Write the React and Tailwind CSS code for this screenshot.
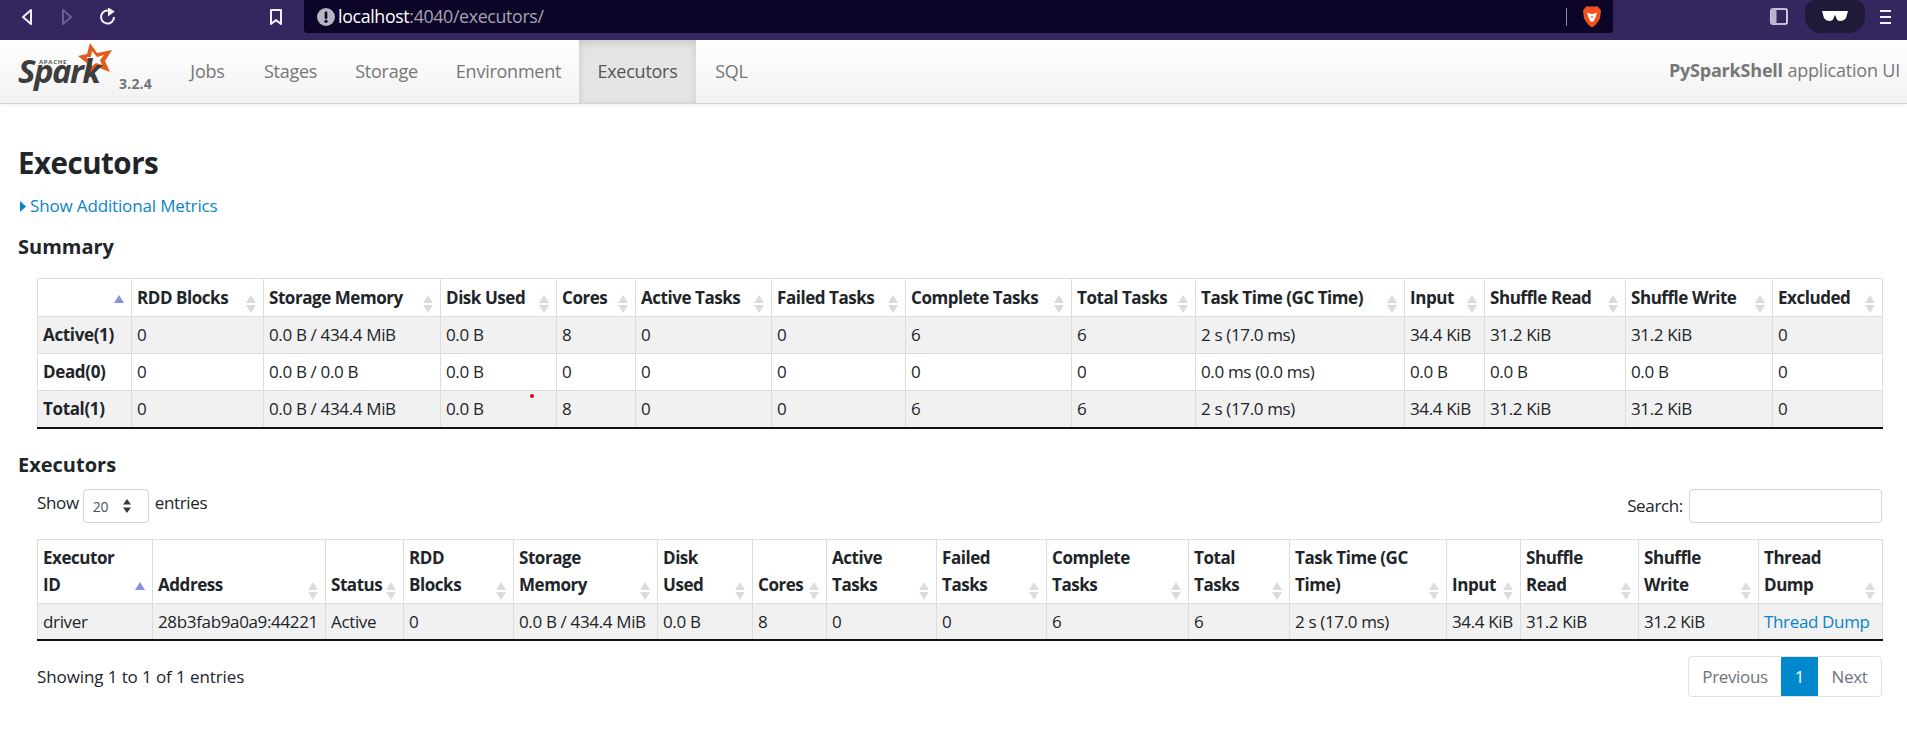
import React from "react";

const Sort = ({ active, className }) => (
  <svg className={className} width="12" height="19" viewBox="0 0 12 19">
    <path d="M6 0 L11 8 L1 8 Z" fill={active ? "#8b8fdc" : "#dcdcdc"} />
    {!active && <path d="M6 18 L11 10 L1 10 Z" fill="#dcdcdc" />}
  </svg>
);

const w1 = ["w-[94px]", "w-[132px]", "w-[177px]", "w-[116px]", "w-[79px]", "w-[136px]", "w-[134px]", "w-[166px]", "w-[124px]", "w-[209px]", "w-[80px]", "w-[141px]", "w-[147px]", "w-[110px]"];
const w2 = ["w-[115px]", "w-[173px]", "w-[78px]", "w-[110px]", "w-[144px]", "w-[95px]", "w-[74px]", "w-[110px]", "w-[110px]", "w-[142px]", "w-[101px]", "w-[157px]", "w-[74px]", "w-[118px]", "w-[120px]", "w-[124px]"];

const head1 = ["", "RDD Blocks", "Storage Memory", "Disk Used", "Cores", "Active Tasks", "Failed Tasks", "Complete Tasks", "Total Tasks", "Task Time (GC Time)", "Input", "Shuffle Read", "Shuffle Write", "Excluded"];
const rows1 = [
  ["Active(1)", "0", "0.0 B / 434.4 MiB", "0.0 B", "8", "0", "0", "6", "6", "2 s (17.0 ms)", "34.4 KiB", "31.2 KiB", "31.2 KiB", "0"],
  ["Dead(0)", "0", "0.0 B / 0.0 B", "0.0 B", "0", "0", "0", "0", "0", "0.0 ms (0.0 ms)", "0.0 B", "0.0 B", "0.0 B", "0"],
  ["Total(1)", "0", "0.0 B / 434.4 MiB", "0.0 B", "8", "0", "0", "6", "6", "2 s (17.0 ms)", "34.4 KiB", "31.2 KiB", "31.2 KiB", "0"],
];
const head2 = ["Executor\nID", "Address", "Status", "RDD Blocks", "Storage Memory", "Disk Used", "Cores", "Active Tasks", "Failed Tasks", "Complete Tasks", "Total Tasks", "Task Time (GC Time)", "Input", "Shuffle Read", "Shuffle Write", "Thread Dump"];
const row2 = ["driver", "28b3fab9a0a9:44221", "Active", "0", "0.0 B / 434.4 MiB", "0.0 B", "8", "0", "0", "6", "6", "2 s (17.0 ms)", "34.4 KiB", "31.2 KiB", "31.2 KiB", "Thread Dump"];

function Head({ labels, widths, h }) {
  return (
    <thead>
      <tr className={h}>
        {labels.map((l, i) => (
          <th key={i} className={`${widths[i]} relative whitespace-pre-line border border-[#dddddd] pl-[5px] pr-[16px] pb-[5px] align-bottom text-left text-[17px] font-bold leading-[27px] tracking-[-0.45px] text-[#212529]`}>
            {l}
            <Sort active={i === 0} className="absolute right-[6px] bottom-[2px]" />
          </th>
        ))}
      </tr>
    </thead>
  );
}

function Logo() {
  return (
    <div className="relative h-[63px] w-[170px] shrink-0">
      <svg className="absolute left-[14px] top-0" width="110" height="60" viewBox="0 0 110 60">
        <path d="M76 3 L83 13 L98 10 L91 21 L96 32 L83 27 L76 33 L74 24 L64 16 L73 14 Z M78 11 L77 17 L72 17 L77 21 L78 26 L82 23 L88 25 L86 20 L90 15 L83 17 Z" fill="#e25a1c" fillRule="evenodd" />
        <text x="25" y="24" fontFamily="'Open Sans', sans-serif" fontSize="6" fontWeight="700" fill="#555555" letterSpacing="0.7">APACHE</text>
        <text x="4" y="43" fontFamily="'Open Sans', sans-serif" fontSize="33" fontWeight="700" fontStyle="italic" fill="#3d3d3d" letterSpacing="-1.6">Spark</text>
      </svg>
      <span className="absolute left-[119px] top-[33px] text-[14px] font-bold tracking-[0.2px] text-[#6f7478]">3.2.4</span>
    </div>
  );
}

const NavItem = ({ children, active, className }) => (
  <div className={`flex items-center justify-center whitespace-nowrap text-[18px] tracking-[-0.25px] ${active ? "bg-[#e5e5e5] text-[#555555] shadow-[inset_0_3px_8px_rgba(0,0,0,0.125)]" : "text-[#777777]"} ${className}`}>{children}</div>
);

export default function App() {
  return (
    <div className="min-h-[747px] bg-white font-['Open_Sans',sans-serif] text-[17px] tracking-[-0.35px] text-[#212529]">
      {/* browser bar */}
      <div className="flex h-[40px] items-start bg-[#35265f]">
        <div className="flex h-[33px] w-[304px] shrink-0 items-center">
          <svg className="ml-[20px]" width="14" height="18" viewBox="0 0 14 18" fill="none" stroke="#f2f0f8" strokeWidth="2" strokeLinejoin="round"><path d="M11 2 L3 9 L11 16 Z" /></svg>
          <svg className="ml-[26px]" width="14" height="18" viewBox="0 0 14 18" fill="none" stroke="#6a5c95" strokeWidth="2" strokeLinejoin="round"><path d="M3 2 L11 9 L3 16 Z" /></svg>
          <svg className="ml-[25px]" width="18" height="18" viewBox="0 0 18 18" fill="none" stroke="#f2f0f8" strokeWidth="2"><path d="M15 9 A6.5 6.5 0 1 1 11 3" /><path d="M10 1 L14 3.5 L10 6.5 Z" fill="#f2f0f8" /></svg>
          <svg className="ml-[152px]" width="14" height="18" viewBox="0 0 14 18" fill="none" stroke="#f2f0f8" strokeWidth="2" strokeLinejoin="round"><path d="M2 2 H12 V16 L7 12 L2 16 Z" /></svg>
        </div>
        <div className="flex h-[33px] w-[1309px] shrink-0 items-center rounded-b-[4px] bg-[#0c0527] pl-[13px] pr-[11px]">
          <svg width="18" height="18" viewBox="0 0 18 18"><circle cx="9" cy="9" r="9" fill="#b7b4c2" /><rect x="7.7" y="3.5" width="2.6" height="7.5" rx="1" fill="#0c0527" /><circle cx="9" cy="13.3" r="1.6" fill="#0c0527" /></svg>
          <span className="ml-[3px] text-[17.8px] text-white">localhost<span className="text-[#a6a3b3]">:4040/executors/</span></span>
          <div className="ml-auto h-[18px] w-px bg-[#8d8a99]" />
          <svg className="ml-[15px]" width="20" height="24" viewBox="0 0 20 23">
            <path d="M4 1 H16 L19 5 L18 13 L14 19 L10 22 L6 19 L2 13 L1 5 Z" fill="#f1501f" />
            <path d="M5 7 L9 8.5 H11 L15 7 L13.5 12 L11.5 16 H8.5 L6.5 12 Z" fill="#ffffff" />
            <path d="M8.5 11 H11.5 L10 13 Z" fill="#f1501f" />
          </svg>
        </div>
        <div className="flex h-[33px] flex-1 items-center">
          <svg className="ml-[157px]" width="18" height="17" viewBox="0 0 18 17"><rect x="1" y="1" width="16" height="15" rx="1.5" fill="none" stroke="#f2f0f8" strokeWidth="1.6" /><rect x="1" y="1" width="5.5" height="15" fill="#b9b3cd" /></svg>
          <div className="ml-[17px] flex h-[33px] w-[60px] items-center justify-center rounded-b-[16px] rounded-t-[10px] bg-[#1f1a38]">
            <svg width="26" height="11" viewBox="0 0 26 11"><path d="M0 0 H26 L24 7 Q22 10 18 10 Q15 10 14 6 L13 4 L12 6 Q11 10 8 10 Q4 10 2 7 Z" fill="#ffffff" /></svg>
          </div>
          <div className="ml-[15px] flex w-[11px] flex-col gap-[4px]">
            <div className="h-[2px] bg-[#f2f0f8]" /><div className="h-[2px] bg-[#f2f0f8]" /><div className="h-[2px] bg-[#f2f0f8]" />
          </div>
        </div>
      </div>

      {/* navbar */}
      <div className="flex h-[64px] items-stretch border-b border-[#d4d4d4] bg-gradient-to-b from-white to-[#f2f2f2] shadow-[0_1px_4px_rgba(0,0,0,0.065)]">
        <Logo />
        <NavItem className="ml-[19px] w-[37px]">Jobs</NavItem>
        <NavItem className="ml-[37px] w-[55px]">Stages</NavItem>
        <NavItem className="ml-[37px] w-[63px]">Storage</NavItem>
        <NavItem className="ml-[38px] w-[105px]">Environment</NavItem>
        <NavItem active className="ml-[18px] w-[117px]">Executors</NavItem>
        <NavItem className="ml-[19px] w-[33px]">SQL</NavItem>
        <div className="ml-auto flex items-center whitespace-nowrap pr-[7px] pb-[2px] text-[18px] tracking-[-0.2px] text-[#777777]"><b>PySparkShell</b>&nbsp;application UI</div>
      </div>

      {/* content */}
      <div className="pl-[18px] pr-[25px]">
        <h1 className="mt-[39px] text-[29.5px] font-bold leading-[40px] tracking-[-0.5px]">Executors</h1>
        <div className="mt-[11px] flex h-[24px] items-center tracking-[-0.15px] text-[#0a84c8]">
          <svg className="ml-[2px] mr-[4px]" width="6" height="11" viewBox="0 0 6 11"><path d="M0 0 L6 5.5 L0 11 Z" fill="#0a84c8" /></svg>
          Show Additional Metrics
        </div>
        <h4 className="mt-[15px] text-[20px] font-bold leading-[28px] tracking-[0px]">Summary</h4>

        <div className="ml-[19px] mt-[17px]">
          <table className="w-[1845px] table-fixed border-collapse border-b-2 border-b-[#111111]">
            <Head labels={head1} widths={w1} h="h-[38px]" />
            <tbody>
              {rows1.map((r, ri) => (
                <tr key={ri} className={`h-[37px] ${ri === 1 ? "bg-white" : "bg-[#f1f1f1]"}`}>
                  {r.map((c, i) => (
                    <td key={i} className={`${i === 0 ? "font-bold" : ""} relative border border-[#dddddd] px-[5px] whitespace-nowrap`}>
                      {c}
                      {ri === 2 && i === 3 && <span className="absolute left-[89px] top-[3px] h-[4px] w-[4px] rounded-full bg-[#e3001b]" />}
                    </td>
                  ))}
                </tr>
              ))}
            </tbody>
          </table>
        </div>

        <h4 className="mt-[22px] text-[20px] font-bold leading-[28px] tracking-[0px]">Executors</h4>

        <div className="ml-[19px] mt-[10px] flex h-[34px] items-center">
          <span className="pb-[6px]">Show</span>
          <div className="ml-[4px] flex h-[34px] w-[66px] items-center rounded-[4px] border border-[#ced4da] pl-[9px] text-[14px] text-[#495057]">
            <span className="pt-[2px]">20</span>
            <svg className="ml-[14px]" width="10" height="14" viewBox="0 0 10 14"><path d="M5 0 L9 5.5 H1 Z M5 14 L9 8.5 H1 Z" fill="#343a40" /></svg>
          </div>
          <span className="ml-[6px] pb-[6px]">entries</span>
          <span className="ml-auto pr-[6px]">Search:</span>
          <div className="h-[34px] w-[193px] rounded-[4px] border border-[#ced4da]" />
        </div>

        <div className="ml-[19px] mt-[16px]">
          <table className="w-[1845px] table-fixed border-collapse border-b-2 border-b-[#111111]">
            <Head labels={head2} widths={w2} h="h-[64px]" />
            <tbody>
              <tr className="h-[37px] bg-[#f1f1f1]">
                {row2.map((c, i) => (
                  <td key={i} className={`border border-[#dddddd] px-[5px] whitespace-nowrap ${i === 15 ? "text-[#0a84c8]" : ""}`}>{c}</td>
                ))}
              </tr>
            </tbody>
          </table>
        </div>

        <div className="ml-[19px] mt-[15px] flex items-center justify-between">
          <span className="tracking-[-0.1px]">Showing 1 to 1 of 1 entries</span>
          <div className="flex h-[41px] items-stretch overflow-hidden rounded-[4px] border border-[#dee2e6] text-[#6c757d]">
            <div className="flex w-[92px] items-center justify-center">Previous</div>
            <div className="flex w-[37px] items-center justify-center bg-[#0088cc] text-white">1</div>
            <div className="flex w-[63px] items-center justify-center">Next</div>
          </div>
        </div>
      </div>
    </div>
  );
}
